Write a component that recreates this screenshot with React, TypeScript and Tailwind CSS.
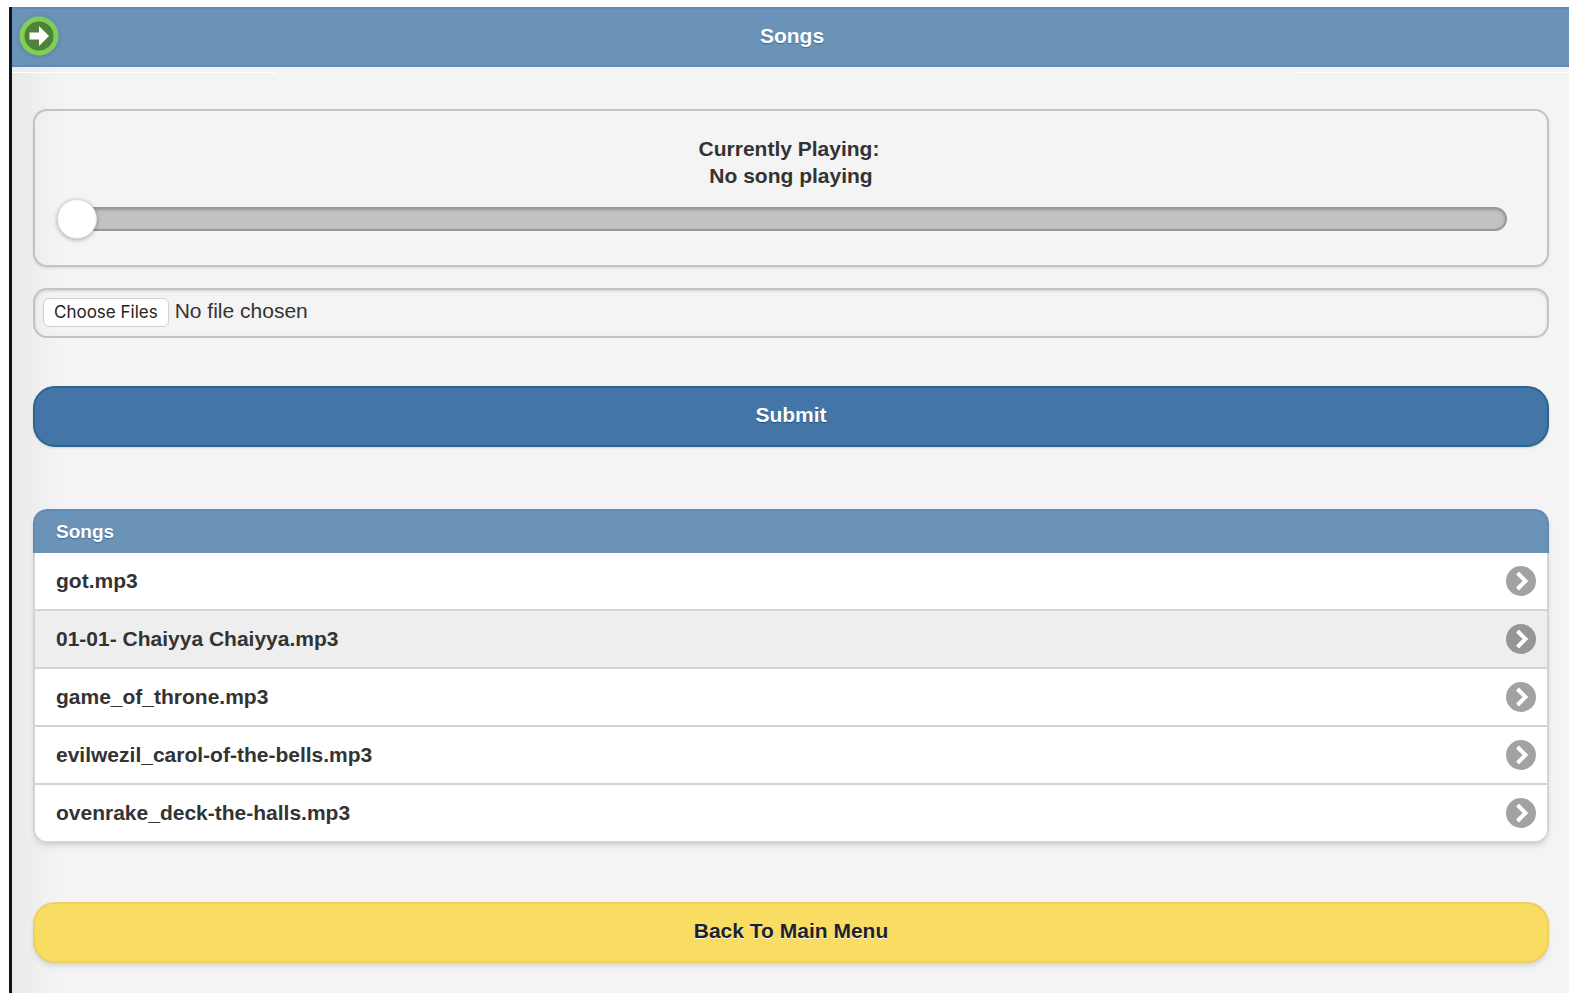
import { useState } from "react";

const songs = [
  "got.mp3",
  "01-01- Chaiyya Chaiyya.mp3",
  "game_of_throne.mp3",
  "evilwezil_carol-of-the-bells.mp3",
  "ovenrake_deck-the-halls.mp3",
];

const ArrowIcon = () => (
  <svg viewBox="0 0 40 40" className="size-10 drop-shadow-sm" aria-hidden="true">
    <circle cx="20" cy="20" r="17" fill="#4d8238" stroke="#7dcf55" strokeWidth="5" />
    <path d="M10.5 16.5h9.5v-6.500l10 10-10 10v-6.500h-9.500z" fill="#fff" />
  </svg>
);

const ChevronIcon = ({ active }: { active: boolean }) => (
  <svg viewBox="0 0 30 30" className="size-[30px] shrink-0" aria-hidden="true">
    <circle cx="15" cy="15" r="15" fill={active ? "#969696" : "#a2a2a2"} />
    <path d="M11.500 7l8 8-8 8" fill="none" stroke="#fff" strokeWidth="4" />
  </svg>
);

export default function App() {
  const [position, setPosition] = useState(0);
  const [current, setCurrent] = useState(1);

  return (
    <div className="bg-white px-[9px] pt-[7px] pb-2 font-['Liberation_Sans',Arial,sans-serif] text-[21px] leading-7 text-[#333]">
      <div className="border-l-[3px] border-[#10151c] bg-[#f4f4f4]">
        <header className="grid h-[60px] grid-cols-[60px_1fr_60px] items-center border-y-2 border-[#6189b1] bg-[#6b92b7] pr-1 pb-[2px] pl-[7px]">
          <button type="button" aria-label="Next" className="size-10">
            <ArrowIcon />
          </button>
          <h1 className="text-center font-bold text-white [text-shadow:0_1px_1px_#3d6a96]">Songs</h1>
        </header>

        <main className="bg-linear-to-r from-[#eaeaea] to-[#f4f4f4] to-[50px] pb-[30px]">
          <div className="flex h-[42px] justify-between pt-[5px]">
            <div className="h-px w-[264px] bg-white" />
            <div className="h-px w-[276px] bg-white" />
          </div>

          <div className="mr-5 ml-[21px]">
            <section className="rounded-[14px] border-2 border-[#c3c3c3] pt-6 pr-10 pb-[26px] pl-[22px] shadow-sm">
              <div className="-mr-[18px] mb-[10px] text-center leading-[27px] font-bold">
                <p className="pr-1">Currently Playing:</p>
                <p>No song playing</p>
              </div>
              <input
                type="range"
                aria-label="Song position"
                min={0}
                max={100}
                value={position}
                onChange={(e) => setPosition(Number(e.target.value))}
                className="block h-10 w-full appearance-none bg-transparent [&::-webkit-slider-runnable-track]:h-6 [&::-webkit-slider-runnable-track]:rounded-full [&::-webkit-slider-runnable-track]:border-2 [&::-webkit-slider-runnable-track]:border-[#999] [&::-webkit-slider-runnable-track]:bg-[#c2c2c2] [&::-webkit-slider-runnable-track]:shadow-[inset_0_1px_3px_rgba(0,0,0,0.2)] [&::-webkit-slider-thumb]:-mt-[10px] [&::-webkit-slider-thumb]:-ml-[2px] [&::-webkit-slider-thumb]:size-10 [&::-webkit-slider-thumb]:appearance-none [&::-webkit-slider-thumb]:rounded-full [&::-webkit-slider-thumb]:border [&::-webkit-slider-thumb]:border-[#ddd] [&::-webkit-slider-thumb]:bg-white [&::-webkit-slider-thumb]:shadow-[0_1px_4px_rgba(0,0,0,0.3)]"
              />
            </section>

            <form onSubmit={(e) => e.preventDefault()}>
              <input
                type="file"
                multiple
                aria-label="Song files"
                className="mt-[21px] block h-[50px] w-full rounded-[14px] border-2 border-[#c3c3c3] px-2 py-[7px] shadow-[inset_0_1px_3px_rgba(0,0,0,0.15)] file:mr-[6px] file:h-[29px] file:rounded-md file:border file:border-solid file:border-[#d0d0d0] file:bg-white file:px-[10px] file:font-['Inter'] file:text-[17px] file:leading-6 file:text-[#222]"
              />
              <button
                type="submit"
                className="mt-12 block h-[61px] w-full rounded-[22px] border-2 border-[#2c638f] bg-[#4376a6] pb-1 font-bold text-white shadow-sm [text-shadow:0_1px_1px_#234f78]"
              >
                Submit
              </button>
            </form>

            <section className="mt-[62px] overflow-hidden rounded-[14px] shadow-md">
              <h2 className="h-11 rounded-t-[14px] border-2 border-b-0 border-[#6189b1] bg-[#6b92b7] pl-[21px] text-[19px] leading-[42px] font-bold text-white [text-shadow:0_1px_1px_#3d6a96]">
                Songs
              </h2>
              <ul className="divide-y-2 divide-[#d3d3d3] overflow-hidden rounded-b-[14px] border-2 border-t-0 border-[#d3d3d3]">
                {songs.map((song, index) => (
                  <li key={song}>
                    <button
                      type="button"
                      onClick={() => setCurrent(index)}
                      className={`flex h-14 w-full items-center justify-between pr-[11px] pl-[21px] text-left font-bold ${
                        index === current ? "bg-[#eeeeee]" : "bg-white"
                      }`}
                    >
                      <span>{song}</span>
                      <ChevronIcon active={index === current} />
                    </button>
                  </li>
                ))}
              </ul>
            </section>

            <button
              type="button"
              className="mt-[59px] block h-[61px] w-full rounded-[22px] border-2 border-[#efd05b] bg-[#f9dd62] pb-1 font-bold text-[#222] shadow-md [text-shadow:0_1px_0_#fff]"
            >
              Back To Main Menu
            </button>
          </div>
        </main>
      </div>
    </div>
  );
}
